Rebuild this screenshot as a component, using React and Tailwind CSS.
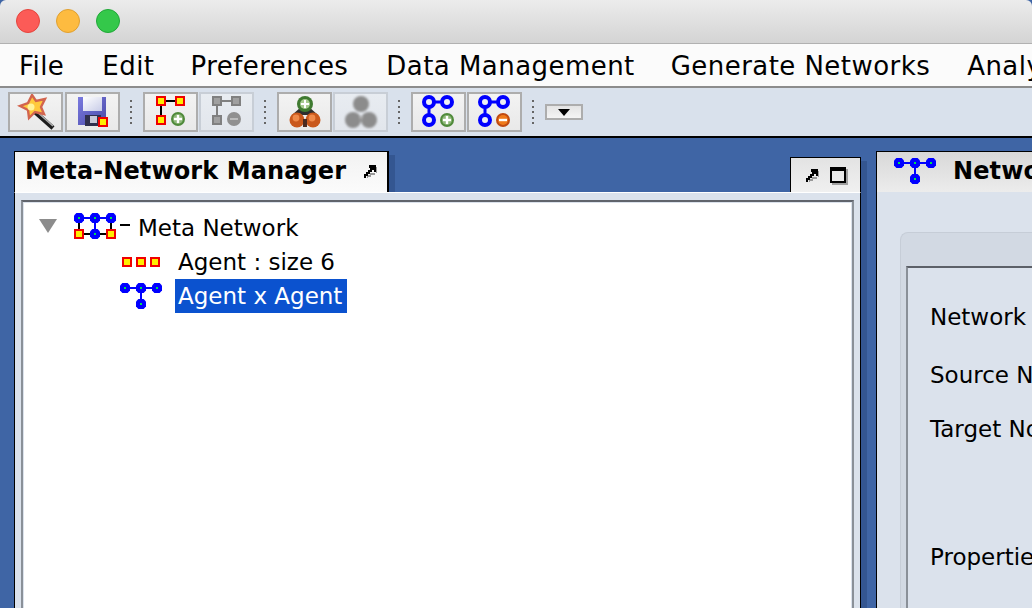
const FONT = { fontFamily: '"DejaVu Sans", sans-serif' };

function BlueNode({ x, y, r = 5 }) {
  const c = 2.6;
  const pts = [[-c, -r], [c, -r], [r, -c], [r, c], [c, r], [-c, r], [-r, c], [-r, -c]].map(([a, b]) => `${x + a},${y + b}`).join(" ");
  return (
    <g>
      <polygon points={pts} fill="#0000ff" />
      <rect x={x - 1} y={y - 1} width="2" height="2" fill="#00e050" shapeRendering="crispEdges" />
    </g>
  );
}
function RedSq({ x, y, s = 10, b = 2 }) {
  return <rect x={x + b / 2} y={y + b / 2} width={s - b} height={s - b} fill="#ffee00" stroke="#f00000" strokeWidth={b} shapeRendering="crispEdges" />;
}
function Badge({ x, y, r = 7, color = "#4f8a3a", sign = "+" }) {
  return (
    <g>
      <circle cx={x} cy={y} r={r} fill={color} />
      <circle cx={x} cy={y} r={r - 2} fill={color === "#4f8a3a" ? "#8fb87a" : "#ef7a1a"} />
      <rect x={x - 4} y={y - 1.2} width="8" height="2.4" fill="#fff" />
      {sign === "+" && <rect x={x - 1.2} y={y - 4} width="2.4" height="8" fill="#fff" />}
    </g>
  );
}
function Wand() {
  return (
    <svg width="40" height="36" viewBox="0 0 40 36">
      <path d="M19 18 L37 34" stroke="#1c1c1c" strokeWidth="4.5" />
      <path d="M20 17 L37 32" stroke="#b0b0b0" strokeWidth="1.6" />
      <path d="M16 1 L20 7 L29 5 L25 13 L28 20 L19 18 L13 24 L12 16 L4 12 L12 9 Z" fill="#ffc93c" stroke="#d2644e" strokeWidth="2.4" />
      <circle cx="15" cy="13" r="3.5" fill="#fff39a" />
    </svg>
  );
}
function Floppy() {
  return (
    <svg width="32" height="32" viewBox="0 0 32 32">
      <defs>
        <linearGradient id="fl" x1="0" y1="0" x2="1" y2="1">
          <stop offset="0" stopColor="#7a7ae0" />
          <stop offset="1" stopColor="#4a4aa8" />
        </linearGradient>
        <linearGradient id="lb" x1="0" y1="0" x2="1" y2="1">
          <stop offset="0" stopColor="#ffffff" />
          <stop offset="1" stopColor="#c8cce8" />
        </linearGradient>
      </defs>
      <rect x="1" y="1" width="28" height="28" fill="url(#fl)" />
      <rect x="6" y="1" width="19" height="14" fill="url(#lb)" />
      <rect x="8" y="19" width="16" height="11" fill="#30304e" />
      <rect x="13" y="20" width="7" height="7" fill="#c8c8d8" />
      <RedSq x={21} y={21} />
    </svg>
  );
}
function NodeAdd({ off }) {
  const line = off ? "#808080" : "#000";
  return (
    <svg width="30" height="32" viewBox="0 0 30 32" shapeRendering="crispEdges" className={off ? "blur-[0.4px]" : ""}>
      <rect x="6" y="4" width="18" height="2" fill={line} />
      <rect x="4" y="5" width="2" height="20" fill={line} />
      {off ? (
        <g>
          <rect x="1" y="1" width="8" height="8" fill="#a0a0a0" stroke="#808080" strokeWidth="2" />
          <rect x="20" y="1" width="8" height="8" fill="#a0a0a0" stroke="#808080" strokeWidth="2" />
          <rect x="1" y="20" width="8" height="8" fill="#a0a0a0" stroke="#808080" strokeWidth="2" />
          <circle cx="22" cy="23" r="7" fill="#909090" shapeRendering="auto" />
          <rect x="18" y="22" width="8" height="2" fill="#bbb" />
        </g>
      ) : (
        <g>
          <RedSq x={0} y={0} />
          <RedSq x={19} y={0} />
          <RedSq x={0} y={19} />
          <g shapeRendering="auto"><Badge x={22} y={23} /></g>
        </g>
      )}
    </svg>
  );
}
function Group({ off }) {
  return (
    <svg width="34" height="34" viewBox="0 0 34 34" className={off ? "blur-[0.8px]" : "blur-[0.4px]"}>
      {off ? (
        <g fill="#8c8c8c">
          <circle cx="17" cy="9" r="8" />
          <circle cx="9" cy="25" r="8" />
          <circle cx="25" cy="25" r="8" />
          <rect x="15" y="21" width="4" height="3" fill="#aaa" />
        </g>
      ) : (
        <g>
          <path d="M13 12 L4 20 L30 20 L21 12 Z" fill="#2e2e2e" />
          <circle cx="9" cy="25" r="7.5" fill="#c9581c" />
          <circle cx="8" cy="23" r="3.4" fill="#ef8a4a" />
          <circle cx="25" cy="25" r="7.5" fill="#c9581c" />
          <circle cx="24" cy="23" r="3.4" fill="#ef8a4a" />
          <rect x="15" y="24" width="4" height="8" fill="#4a2a20" />
          <circle cx="17" cy="9" r="8" fill="#3f7a30" />
          <circle cx="17" cy="9" r="5" fill="#a8cc90" />
          <rect x="13" y="8" width="8" height="2" fill="#fff" />
          <rect x="16" y="5" width="2" height="8" fill="#fff" />
        </g>
      )}
    </svg>
  );
}
function Rings({ minus }) {
  return (
    <svg width="34" height="34" viewBox="0 0 34 34">
      <path d="M11 7 H22 M7 12 V21" stroke="#0000ff" strokeWidth="3" />
      <circle cx="7" cy="7" r="5" fill="#eef0f4" stroke="#0000ff" strokeWidth="4" />
      <circle cx="25" cy="7" r="5" fill="#eef0f4" stroke="#0000ff" strokeWidth="4" />
      <circle cx="7" cy="25" r="5" fill="#eef0f4" stroke="#0000ff" strokeWidth="4" />
      {minus ? <Badge x={25} y={25} color="#c04a10" sign="-" /> : <Badge x={25} y={25} />}
    </svg>
  );
}
function LinkIcon() {
  return (
    <svg width="42" height="26" viewBox="0 0 42 26" className="block">
      <path d="M5 5 H37 M21 5 V21" stroke="#0000ff" strokeWidth="2" />
      <BlueNode x={5} y={5} />
      <BlueNode x={21} y={5} />
      <BlueNode x={37} y={5} />
      <BlueNode x={21} y={21} />
    </svg>
  );
}
function MetaIcon() {
  return (
    <svg width="42" height="26" viewBox="0 0 42 26" className="block">
      <path d="M5 5 V21 M37 5 V21 M5 21 H37" stroke="#000" strokeWidth="2" />
      <path d="M5 5 H37 M21 5 V21" stroke="#0000ff" strokeWidth="2" />
      <BlueNode x={5} y={5} />
      <BlueNode x={21} y={5} />
      <BlueNode x={37} y={5} />
      <BlueNode x={21} y={21} />
      <RedSq x={0} y={16} />
      <RedSq x={32} y={16} />
    </svg>
  );
}
function AgentIcon() {
  return (
    <svg width="38" height="10" viewBox="0 0 38 10" className="block">
      <RedSq x={0} y={0} />
      <RedSq x={14} y={0} />
      <RedSq x={28} y={0} />
    </svg>
  );
}
function UndockIcon() {
  return (
    <svg width="14" height="16" viewBox="0 0 14 16" shapeRendering="crispEdges">
      <path d="M13 4 H14 V10 H12 V12 H8 V14 H5 V15 H4 V12 H7 V10 H13 Z" fill="#999" />
      <path d="M6 2 H13 V9 H11 V7 H9 V9 H7 V11 H5 V13 H3 V15 H1 V11 H3 V9 H5 V7 H7 V5 H6 Z" fill="#000" />
    </svg>
  );
}
function ToolButton({ children, off }) {
  return (
    <div className={off
      ? "flex h-10 w-[55px] items-center justify-center border-2 border-[#c8ced6] bg-gradient-to-b from-[#e8ecf1] to-[#e2e6ec]"
      : "flex h-10 w-[55px] items-center justify-center border-2 border-[#adadad] bg-gradient-to-b from-[#f3f3f3] to-[#e9e9e9]"}>
      {children}
    </div>
  );
}
function Sep() {
  return (
    <div className="mx-[10px] flex h-6 w-[3px] flex-col justify-between self-center">
      {[0, 1, 2, 3, 4].map((i) => <div key={i} className="h-[2px] w-[2px] bg-[#666]" />)}
    </div>
  );
}

export default function App() {
  return (
    <div className="flex h-[608px] w-[1032px] flex-col overflow-hidden bg-[#3f65a5] text-black" style={FONT}>
      <div className="flex h-[44px] shrink-0 items-center gap-[16px] rounded-t-[6px] border-b border-[#b1b1b1] bg-gradient-to-b from-[#ececec] to-[#d4d4d4] pb-[1px] pl-[16px]">
        <div className="h-6 w-6 rounded-full border border-[#e5443c] bg-[#fc5b57]" />
        <div className="h-6 w-6 rounded-full border border-[#e0a030] bg-[#fdbb40]" />
        <div className="h-6 w-6 rounded-full border border-[#20a838] bg-[#34c84a]" />
      </div>
      <div className="flex h-[42px] shrink-0 items-center whitespace-nowrap bg-[#fbfbfb] pl-[19px] pt-[2px] text-[26px] tracking-[0.45px]">
        <span className="mr-[38px]">File</span>
        <span className="mr-[36px]">Edit</span>
        <span className="mr-[38px]">Preferences</span>
        <span className="mr-[36px]">Data Management</span>
        <span className="mr-[37px]">Generate Networks</span>
        <span>Analysis</span>
      </div>
      <div className="flex h-[50px] shrink-0 items-center border-t-2 border-[#8c8c8c] bg-[#d9e1ec] pl-2">
        <div className="flex gap-[2px]">
          <ToolButton><Wand /></ToolButton>
          <ToolButton><Floppy /></ToolButton>
        </div>
        <Sep />
        <div className="flex gap-[1px]">
          <ToolButton><NodeAdd /></ToolButton>
          <ToolButton off><NodeAdd off /></ToolButton>
        </div>
        <Sep />
        <div className="flex gap-[1px]">
          <ToolButton><Group /></ToolButton>
          <ToolButton off><Group off /></ToolButton>
        </div>
        <Sep />
        <div className="flex gap-[1px]">
          <ToolButton><Rings /></ToolButton>
          <ToolButton><Rings minus /></ToolButton>
        </div>
        <Sep />
        <div className="flex h-[16px] w-[38px] items-center justify-center border-2 border-[#adadad] bg-gradient-to-b from-[#e4e4e4] to-[#f4f4f4]">
          <div className="h-0 w-0 border-x-[6px] border-t-[7px] border-x-transparent border-t-black" />
        </div>
      </div>
      <div className="flex min-h-0 flex-1 border-t-2 border-black pl-[14px] pt-[13px]">
        <div className="flex w-[847px] shrink-0 flex-col">
          <div className="flex h-[41px] shrink-0 items-end justify-between">
            <div className="flex h-[41px] w-[375px] items-center justify-between border-l border-r-2 border-t border-black bg-gradient-to-b from-[#f2f2f2] to-[#fbfbfb] pb-[3px] pl-[10px] pr-[10px] shadow-[6px_4px_0_#345691]">
              <span className="whitespace-nowrap text-[24px] font-bold leading-none tracking-[0.1px]">Meta-Network Manager</span>
              <UndockIcon />
            </div>
            <div className="flex h-[35px] w-[71px] items-center justify-center gap-[11px] border-x border-t border-black bg-gradient-to-b from-[#e3e3e3] to-[#f0f0f0] shadow-[6px_4px_0_#345691]">
              <UndockIcon />
              <div className="h-[16px] w-[16px] border-2 border-t-[4px] border-black shadow-[2px_2px_0_#a0a0a0]" />
            </div>
          </div>
          <div className="flex min-h-0 flex-1 flex-col border-x border-t border-black border-t-white bg-[#dbe2ec] px-[6px] pt-[7px] shadow-[6px_0_0_#345691]">
            <div className="min-h-0 flex-1 border-x-2 border-t-2 border-[#8a9098] border-t-[#60646c] bg-white pl-[16px] pt-[9px] shadow-[inset_1px_1px_0_#dbe2ec,inset_-1px_0_0_#dbe2ec]">
              <div className="flex h-[34px] items-center text-[23px]">
                <div className="mb-[4px] mr-[17px] h-0 w-0 border-x-[9px] border-t-[14px] border-x-transparent border-t-[#8c8c8c]" />
                <div className="mb-[4px]"><MetaIcon /></div>
                <div className="mb-[6px] ml-[4px] mr-[8px] h-[2px] w-[10px] bg-black" />
                <span className="whitespace-nowrap">Meta Network</span>
              </div>
              <div className="flex h-[34px] items-center pl-[83px] text-[23px]">
                <AgentIcon />
                <span className="ml-[18px] whitespace-nowrap">Agent : size 6</span>
              </div>
              <div className="flex h-[34px] items-center pl-[81px] text-[23px]">
                <LinkIcon />
                <span className="ml-[13px] flex h-[34px] items-center whitespace-nowrap bg-[#0b52cf] pl-[3px] pr-[5px] text-white">Agent x Agent</span>
              </div>
            </div>
          </div>
        </div>
        <div className="ml-[15px] flex min-w-0 flex-1 flex-col">
          <div className="flex h-[41px] shrink-0 items-center overflow-hidden border-l border-t border-black bg-gradient-to-b from-[#d8d8d8] to-[#ececec] pl-[17px]">
            <div className="mb-[2px]"><LinkIcon /></div>
            <span className="mb-[2px] ml-[17px] whitespace-nowrap text-[24px] font-bold leading-none tracking-[0.1px]">Network Editor</span>
          </div>
          <div className="flex min-h-0 flex-1 flex-col border-l border-black bg-[#dbe2ec] pl-[23px] pt-[40px]">
            <div className="flex min-h-0 flex-1 flex-col rounded-tl-[8px] border-l border-t border-[#c6cdd7] bg-[#d2d9e3] pl-[5px] pt-[33px]">
              <div className="min-h-0 flex-1 overflow-hidden whitespace-nowrap border-l-2 border-t-2 border-[#8a9098] border-t-[#5c6068] bg-[#dbe2ec] pl-[22px] pt-[32px] text-[23px] leading-[34px]">
                <div>Network ID</div>
                <div className="mt-[24px]">Source Nodeset</div>
                <div className="mt-[20px]">Target Nodeset</div>
                <div className="mt-[94px]">Properties</div>
              </div>
            </div>
          </div>
        </div>
      </div>
    </div>
  );
}
